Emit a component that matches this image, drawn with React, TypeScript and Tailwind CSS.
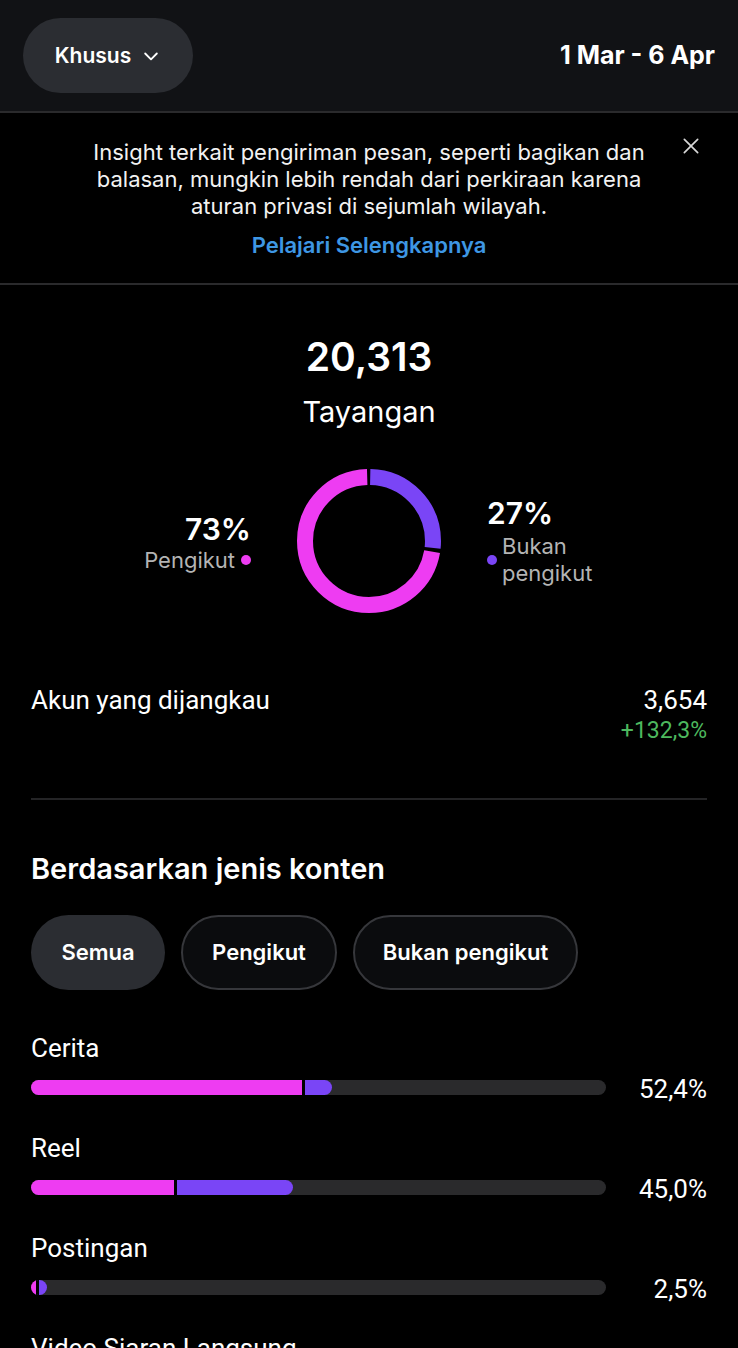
import React from 'react';

interface ContentRow {
  label: string;
  pink: number;
  purple: number;
  value: string;
}

const rows: ContentRow[] = [
  { label: 'Cerita', pink: 47.1, purple: 5.3, value: '52,4%' },
  { label: 'Reel', pink: 24.9, purple: 20.6, value: '45,0%' },
  { label: 'Postingan', pink: 0.8, purple: 2.0, value: '2,5%' },
  { label: 'Video Siaran Langsung', pink: 0.1, purple: 0.1, value: '0,1%' },
];

const roboto = { fontFamily: 'Roboto, "Liberation Sans", sans-serif' };
const inter = { fontFamily: 'Inter, "Noto Sans", sans-serif' };

const Donut: React.FC = () => {
  const r = 64;
  const c = 2 * Math.PI * r;
  const purple = 0.27 * c;
  const gap = 2.5;
  return (
    <svg width="144" height="144" viewBox="0 0 144 144" className="shrink-0">
      <g transform="rotate(-90 72 72)">
        <circle
          cx="72"
          cy="72"
          r={r}
          fill="none"
          stroke="#ee3cf2"
          strokeWidth="16"
          strokeDasharray={`${c - purple - gap * 2} ${c}`}
          strokeDashoffset={-(purple + gap)}
        />
        <circle
          cx="72"
          cy="72"
          r={r}
          fill="none"
          stroke="#7a45f6"
          strokeWidth="16"
          strokeDasharray={`${purple - gap} ${c}`}
          strokeDashoffset={-gap / 2}
        />
      </g>
    </svg>
  );
};

const App: React.FC = () => {
  return (
    <div className="w-[738px] h-[1348px] overflow-hidden bg-black text-white" style={roboto}>
      {/* top bar */}
      <header className="h-[113px] bg-[#111215] border-b-2 border-[#2a2a2c] flex items-center justify-between pl-[23px] pr-[23px]" style={inter}>
        <button className="w-[170px] h-[75px] rounded-full bg-[#2b2d32] flex items-center justify-center gap-[10px] text-[21px] font-semibold">
          Khusus
          <svg width="20" height="20" viewBox="0 0 24 24" fill="none" stroke="white" strokeWidth="2.2" strokeLinecap="round" strokeLinejoin="round">
            <path d="M5 9l7 7 7-7" />
          </svg>
        </button>
        <span className="text-[25px] font-bold">1 Mar - 6 Apr</span>
      </header>

      {/* info banner */}
      <div className="relative border-b-2 border-[#2a2a2c] pt-[26px] pb-[24px] text-center" style={inter}>
        <p className="text-[22px] leading-[27px] text-[#f2f2f2]">
          Insight terkait pengiriman pesan, seperti bagikan dan
          <br />
          balasan, mungkin lebih rendah dari perkiraan karena
          <br />
          aturan privasi di sejumlah wilayah.
        </p>
        <p className="mt-[12px] text-[22px] leading-[27px] font-semibold text-[#3e97e4]">Pelajari Selengkapnya</p>
        <svg className="absolute right-[37px] top-[23px]" width="20" height="20" viewBox="0 0 24 24" fill="none" stroke="#d8d8d8" strokeWidth="2" strokeLinecap="round">
          <path d="M4 4l16 16M20 4L4 20" />
        </svg>
      </div>

      {/* views summary */}
      <div className="flex flex-col items-center" style={inter}>
        <div className="mt-[50px] text-[39px] leading-[44px] font-semibold">20,313</div>
        <div className="mt-[16px] text-[29px] leading-[34px]">Tayangan</div>
        <div className="mt-[40px] flex items-center gap-[46px]">
          <div className="w-[120px] flex flex-col items-end pt-[4px]">
            <span className="text-[30px] leading-[34px] font-semibold">73%</span>
            <span className="flex items-center gap-[6px] text-[22px] leading-[28px] text-[#b4b4b4]">
              Pengikut
              <span className="w-[10px] h-[10px] rounded-full bg-[#ee3cf2]" />
            </span>
          </div>
          <Donut />
          <div className="w-[120px] flex flex-col items-start">
            <span className="text-[30px] leading-[34px] font-semibold">27%</span>
            <div className="mt-[3px] flex items-center gap-[5px]">
              <span className="w-[10px] h-[10px] rounded-full bg-[#7a45f6]" />
              <span className="text-[22px] leading-[27px] text-[#b4b4b4]">
                Bukan
                <br />
                pengikut
              </span>
            </div>
          </div>
        </div>
      </div>

      {/* accounts reached */}
      <div className="px-[31px]">
        <div className="mt-[71px] flex justify-between">
          <span className="text-[26px] leading-[32px]">Akun yang dijangkau</span>
          <div className="flex flex-col items-end">
            <span className="text-[26px] leading-[32px]">3,654</span>
            <span className="mt-[2px] text-[23px] leading-[26px] text-[#4db85e]">+132,3%</span>
          </div>
        </div>
        <div className="mt-[54px] h-[2px] bg-[#242426]" />

        <h2 className="mt-[50px] text-[29px] leading-[38px] font-semibold" style={inter}>
          Berdasarkan jenis konten
        </h2>

        <div className="mt-[27px] flex gap-[16px] text-[22px] font-semibold" style={inter}>
          <button className="w-[134px] h-[75px] rounded-full bg-[#2b2d32]">Semua</button>
          <button className="w-[156px] h-[75px] rounded-full border-2 border-[#36373b] bg-[#0b0c0e]">Pengikut</button>
          <button className="w-[225px] h-[75px] rounded-full border-2 border-[#36373b] bg-[#0b0c0e]">Bukan pengikut</button>
        </div>

        <div className="mt-[43px] flex flex-col gap-[31px]">
          {rows.map(row => (
            <div key={row.label}>
              <div className="text-[26px] leading-[30px]">{row.label}</div>
              <div className="mt-[9px] h-[30px] flex items-center">
                <div className="flex-1 h-[15px] rounded-full bg-[#2a2a2c] overflow-hidden flex">
                  <div className="h-full bg-[#ee3cf2]" style={{ width: `${row.pink}%` }} />
                  <div className="h-full bg-[#7a45f6] border-l-[3px] border-black rounded-r-full" style={{ width: `${row.purple}%` }} />
                </div>
                <span className="w-[101px] text-right text-[26px] leading-[30px] translate-y-[2px]">{row.value}</span>
              </div>
            </div>
          ))}
        </div>
      </div>
    </div>
  );
};

export default App;
